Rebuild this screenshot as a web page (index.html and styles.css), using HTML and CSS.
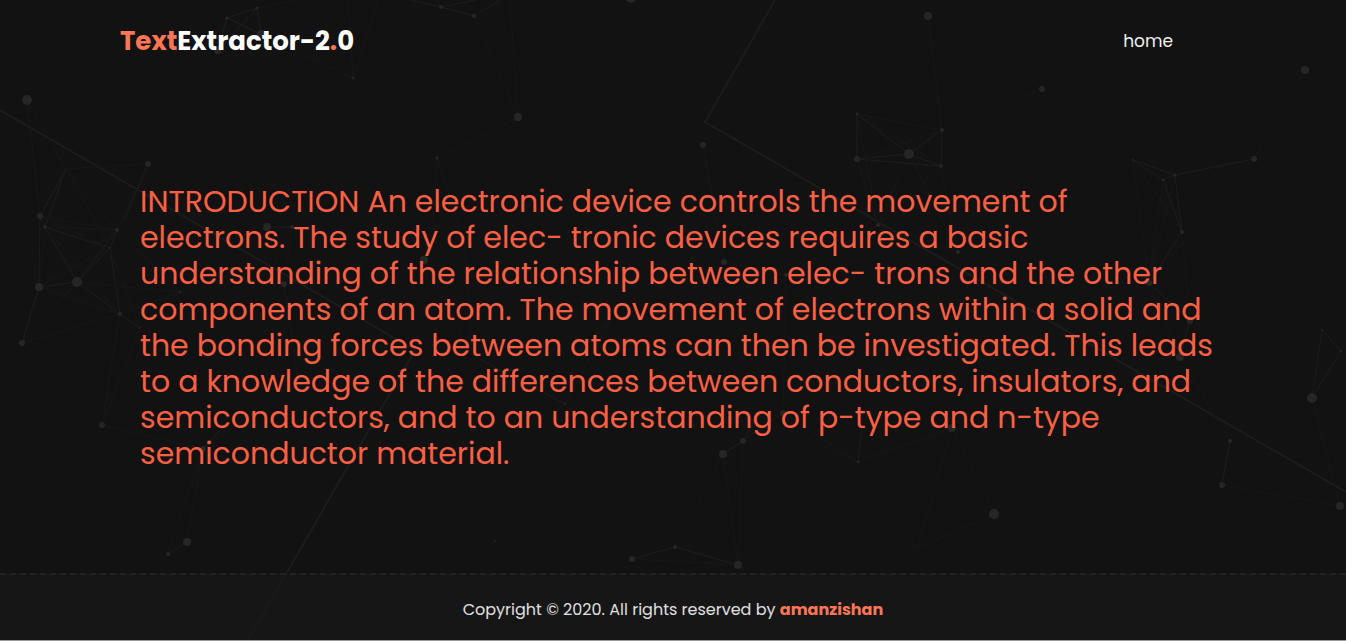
FILE: index.html
```html
<!DOCTYPE html>
<html lang="en">
<head>
<meta charset="utf-8">
<title>TextExtractor-2.0</title>
<link rel="stylesheet" href="styles.css">
</head>
<body>
<div class="page">
  <svg class="network" viewBox="0 0 1346 640" preserveAspectRatio="xMidYMid slice" aria-hidden="true">
    <g class="beams">
      <path d="M775 0L705 122L1346 492"/>
      <path d="M0 110L415 350L248 640"/>
    </g>
    <g class="links">
      <path d="M410 0L441 7L474 16L500 0M441 7L475 0"/>
      <path d="M227 18L257 8L261 34ZM227 18L261 34M218 50L227 18M218 50L257 8"/>
      <path d="M472 355L565 404"/>
      <path d="M40 216L45 227L77 282L120 314L140 328M40 216L39 287L22 343M39 287L77 282L117 230L110 248L77 282M45 227L110 248L120 314"/>
      <path d="M857 114V159L941 166L942 130L909 154L857 114M857 159L909 154L941 166"/>
      <path d="M1133 160L1163 180L1175 175L1254 159M1133 160L1175 175M1163 180L1182 232L1175 175M1182 232L1149 283L1190 321L1180 357"/>
      <path d="M1322 330L1341 351L1312 398ZM1230 441L1222 485"/>
      <path d="M632 559L675 547L738 565M723 454L743 441L758 415M723 454L783 413M168 554L187 542M267 227H292M858 462L862 428"/>
      <path d="M148 164L124 220M66 169L40 216M66 169L45 227M203 449L222 428"/>
    </g>
    <g class="threads">
      <path d="M257 8L300 0M261 34L325 0M348 0L353 78L378 0M353 78L261 34M27 100L40 216M27 100L66 169L148 164M66 169L117 230L148 164M66 169L110 248"/>
      <path d="M40 216L117 230L45 227L39 287L117 230M45 227L120 314M39 287L120 314L22 343L77 282M110 248L140 328M117 230L180 292L120 314M77 282L180 292L117 230M39 287L110 248M40 216L110 248M140 328L102 425L120 314M140 328L180 292"/>
      <path d="M102 425L203 449L187 542M203 449L168 554M267 227L284 284L292 227M284 284L298 380L203 449M424 260L518 117M437 158L518 117L474 16M510 0L518 117M437 158L434 214L424 260L472 355M437 158L464 240L472 355"/>
      <path d="M565 404L610 320L540 390M703 145L724 262L786 275L878 225M724 262L703 145M786 275L783 413"/>
      <path d="M928 16L942 130L1042 89M917 0L928 16M857 114L942 130L857 159L878 225L909 154L958 252M857 114L941 166L878 225L857 159M857 114L878 225M941 166L958 252L878 225"/>
      <path d="M1305 70L1254 159L1149 283M1133 160L1149 283L1163 180M1133 160L1182 232L1190 321M1175 175L1149 283M1149 283L1180 357L1230 441L1312 398L1340 506M1322 330L1312 398"/>
      <path d="M675 547L723 454L738 565L743 441M632 559L738 565M783 413L858 462L952 428L994 514L917 548L858 462M758 415L858 462M952 428L917 548M1222 485L1340 506"/>
    </g>
    <g class="nodes">
      <circle cx="27" cy="100" r="5"/><circle cx="909" cy="154" r="5"/><circle cx="994" cy="514" r="5"/><circle cx="1312" cy="398" r="5"/>
      <circle cx="77" cy="282" r="5"/><circle cx="187" cy="542" r="4"/><circle cx="518" cy="117" r="4"/><circle cx="631" cy="-2" r="5"/>
      <circle cx="928" cy="16" r="4"/><circle cx="1305" cy="70" r="4"/><circle cx="1340" cy="506" r="4"/><circle cx="738" cy="565" r="4"/>
      <circle cx="723" cy="454" r="4"/><circle cx="424" cy="260" r="4"/><circle cx="218" cy="50" r="4"/><circle cx="267" cy="227" r="4"/>
      <circle cx="952" cy="428" r="4"/><circle cx="1180" cy="357" r="4"/><circle cx="39" cy="287" r="4"/><circle cx="261" cy="34" r="4"/>
      <circle cx="40" cy="216" r="3"/><circle cx="148" cy="164" r="3"/><circle cx="22" cy="343" r="3"/><circle cx="102" cy="425" r="3"/>
      <circle cx="743" cy="441" r="3"/><circle cx="783" cy="413" r="3"/><circle cx="632" cy="559" r="3"/><circle cx="724" cy="262" r="3"/>
      <circle cx="1042" cy="89" r="3"/><circle cx="1254" cy="159" r="3"/><circle cx="1222" cy="485" r="3"/><circle cx="1149" cy="283" r="3"/>
      <circle cx="1190" cy="321" r="3"/><circle cx="703" cy="145" r="3"/><circle cx="857" cy="159" r="3"/><circle cx="284" cy="284" r="3"/>
      <circle cx="203" cy="449" r="3"/><circle cx="786" cy="275" r="2"/><circle cx="474" cy="16" r="2"/><circle cx="941" cy="166" r="2"/>
      <circle cx="942" cy="130" r="2"/><circle cx="1182" cy="232" r="2"/><circle cx="1230" cy="441" r="2"/><circle cx="675" cy="547" r="2"/>
      <circle cx="168" cy="554" r="2"/><circle cx="45" cy="227" r="2"/><circle cx="117" cy="230" r="2"/><circle cx="120" cy="314" r="2"/>
      <circle cx="958" cy="252" r="2"/><circle cx="878" cy="225" r="2"/><circle cx="441" cy="7" r="2"/><circle cx="292" cy="227" r="2"/>
      <circle cx="857" cy="114" r="1.5"/><circle cx="353" cy="78" r="1.5"/><circle cx="437" cy="158" r="1.5"/><circle cx="227" cy="18" r="1.5"/>
      <circle cx="257" cy="8" r="1.5"/><circle cx="1163" cy="180" r="1.5"/><circle cx="1175" cy="175" r="1.5"/><circle cx="858" cy="462" r="1.5"/>
      <circle cx="1322" cy="330" r="1"/><circle cx="1341" cy="351" r="1"/><circle cx="565" cy="404" r="1"/><circle cx="1133" cy="160" r="1"/>
      <circle cx="110" cy="248" r="1"/><circle cx="180" cy="292" r="1"/><circle cx="140" cy="328" r="1"/><circle cx="495" cy="541" r="1"/>
    </g>
  </svg>
  <header class="header">
    <a class="logo" href="#"><span class="accent">Text</span>Extractor-2<span class="accent">.</span>0</a>
    <nav><a class="nav-link" href="#">home</a></nav>
  </header>
  <main class="main">
    <p class="extract">INTRODUCTION An electronic device controls the movement of<br>
      electrons. The study of elec- tronic devices requires a basic<br>
      understanding of the relationship between elec- trons and the other<br>
      components of an atom. The movement of electrons within a solid and<br>
      the bonding forces between atoms can then be investigated. This leads<br>
      to a knowledge of the differences between conductors, insulators, and<br>
      semiconductors, and to an understanding of p-type and n-type<br>
      semiconductor material.</p>
  </main>
  <footer class="footer">
    <p class="copyright">Copyright © 2020. All rights reserved by <a class="author" href="#">amanzishan</a></p>
  </footer>
</div>
</body>
</html>
```
FILE: styles.css
```css
* { box-sizing: border-box; }

body {
  margin: 0;
  background: #121212;
  color: #fff;
  font-family: Poppins, Inter, sans-serif;
  font-weight: 400;
}

.page {
  position: relative;
  isolation: isolate;
  display: flex;
  flex-direction: column;
  min-height: 100vh;
  overflow: hidden;
  border-bottom: 1px solid #999;
}

.network {
  position: absolute;
  inset: 0;
  z-index: -1;
  width: 100%;
  height: 100%;
  fill: none;
}

.beams { stroke: #1c1c1c; stroke-width: 2; }
.links { stroke: #1d1d1d; stroke-width: 1; }
.threads { stroke: #171717; stroke-width: 1; }
.nodes { fill: #262626; }

a { text-decoration: none; }

.header {
  display: flex;
  align-items: center;
  justify-content: space-between;
  padding: 22px 173px 22px 120px;
}

.logo {
  color: #fff;
  font-size: 26px;
  font-weight: 700;
  line-height: 38px;
}

.accent { color: #ff7657; }

.nav-link {
  color: #f0f0f0;
  font-size: 17px;
  line-height: 28px;
}

.main {
  flex: 1;
  padding: 102px 120px 98px 140px;
}

.extract {
  margin: 0;
  color: #fb6045;
  font-size: 30px;
  line-height: 36px;
  white-space: nowrap;
}

.footer {
  padding: 22px 0 17px;
  border-top: 2px dashed #222;
  background: rgba(24, 24, 24, 0.7);
  text-align: center;
}

.copyright {
  margin: 0;
  color: #e0e0e0;
  font-size: 16px;
  line-height: 26px;
}

.author {
  color: #ff7657;
  font-weight: 700;
}
```
